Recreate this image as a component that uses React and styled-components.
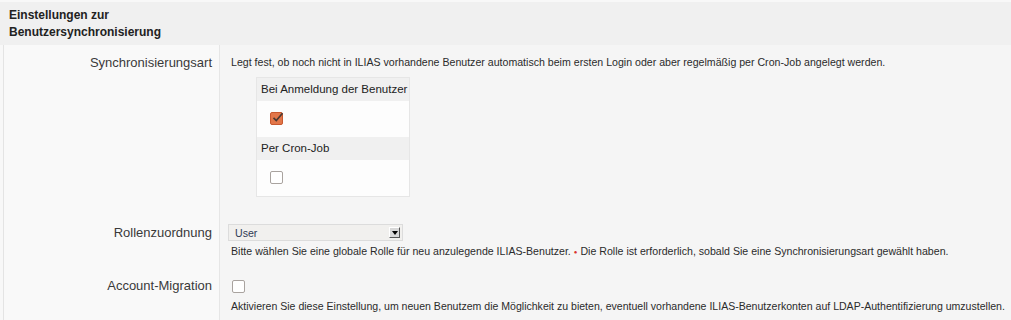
import React from "react";
import styled, { createGlobalStyle } from "styled-components";

const GlobalStyle = createGlobalStyle`
  html, body {
    margin: 0;
    padding: 0;
    background: #f5f5f5;
    font-family: "Liberation Sans", Arial, sans-serif;
    color: #333;
  }
`;

const Page = styled.div`
  width: 1011px;
  height: 320px;
  overflow: hidden;
  padding-top: 2px;
  box-sizing: border-box;
  background-color: #f8f8f8;
`;

const Header = styled.div`
  background: #f0f0f0;
  padding: 5px 9px 4px;
  font-size: 12px;
  font-weight: bold;
  line-height: 17px;
  color: #222;
  height: 43px;
  box-sizing: border-box;
`;

const FormBody = styled.div`
  margin-left: 3px;
  border-left: 1px solid #e4e4e4;
  background: #f5f5f5;
`;

const Row = styled.div`
  display: grid;
  grid-template-columns: 216px 1fr;
`;

const Label = styled.div`
  background: #f9f9f9;
  border-right: 1px solid #e6e6e6;
  text-align: right;
  font-size: 13px;
  line-height: 16px;
  color: #3a3a3a;
  padding: ${(p) => p.$top || "10px"} 7px ${(p) => p.$bottom || "15px"} 0;
`;

const Field = styled.div`
  padding: ${(p) => p.$top || "10px"} 0 ${(p) => p.$bottom || "15px"} 11px;
  font-size: 10.6px;
  line-height: 14px;
  color: #2b2b2b;
`;

const Info = styled.div`
  font-size: 10.6px;
  line-height: 14px;
  white-space: nowrap;
  margin-top: ${(p) => p.$mt || "0"};
`;

const Required = styled.span`
  color: #d9302c;
  margin: 0 3px 0 3px;
  font-size: 6px;
  vertical-align: 1px;
`;

const OptionBox = styled.div`
  width: 154px;
  margin: 8px 0 0 25px;
  border: 1px solid #e6e6e6;
  box-sizing: border-box;
  background: #fdfdfd;
`;

const OptionHead = styled.div`
  background: #f0f0f0;
  height: 23px;
  line-height: 23px;
  padding-left: 4px;
  font-size: 11.5px;
  color: #222;
  white-space: nowrap;
`;

const OptionBody = styled.div`
  height: 36px;
  padding: 11px 0 0 13px;
  box-sizing: border-box;
`;

const Box = styled.span`
  display: block;
  width: 13px;
  height: 13px;
  box-sizing: border-box;
  border-radius: 2px;
  border: 1px solid ${(p) => (p.$checked ? "#c8582f" : "#a9a39f")};
  background: ${(p) => (p.$checked ? "#e27649" : "#fff")};
  position: relative;
  margin-left: ${(p) => p.$ml || "0"};
  margin-top: ${(p) => p.$mt || "0"};
`;

const Check = styled.svg`
  position: absolute;
  left: 0px;
  top: -2px;
`;

function Checkbox({ checked, ml, mt }) {
  return (
    <Box $checked={checked} $ml={ml} $mt={mt}>
      {checked && (
        <Check width="13" height="13" viewBox="0 0 13 13">
          <path d="M2.5 6.8 L5.3 9.6 L11.5 2.2" fill="none" stroke="#4a3a33" strokeWidth="1.7" />
        </Check>
      )}
    </Box>
  );
}

const Select = styled.div`
  width: 175px;
  height: 17px;
  margin-left: -3px;
  border: 1px solid #dcdcdc;
  background: #f1f0ee;
  box-sizing: border-box;
  display: flex;
  align-items: center;
  justify-content: space-between;
  padding: 0 2px 0 6px;
  font-size: 10.6px;
  color: #2f3a55;
`;

const SelectButton = styled.span`
  width: 11px;
  height: 11px;
  box-sizing: border-box;
  background: #d8d8d8;
  border-top: 1px solid #fff;
  border-left: 1px solid #fff;
  border-right: 1px solid #555;
  border-bottom: 1px solid #555;
  display: flex;
  align-items: center;
  justify-content: center;
  &::after {
    content: "";
    border-left: 3px solid transparent;
    border-right: 3px solid transparent;
    border-top: 4px solid #000;
    margin-top: 1px;
  }
`;

export default function App() {
  return (
    <Page>
      <GlobalStyle />
      <Header>
        Einstellungen zur
        <br />
        Benutzersynchronisierung
      </Header>
      <FormBody>
        <Row>
          <Label $top="10px" $bottom="17px">Synchronisierungsart</Label>
          <Field $top="10px" $bottom="17px">
            <Info>
              Legt fest, ob noch nicht in ILIAS vorhandene Benutzer automatisch beim ersten Login oder aber regelmäßig per Cron-Job angelegt werden.
            </Info>
            <OptionBox>
              <OptionHead>Bei Anmeldung der Benutzer</OptionHead>
              <OptionBody>
                <Checkbox checked />
              </OptionBody>
              <OptionHead>Per Cron-Job</OptionHead>
              <OptionBody>
                <Checkbox />
              </OptionBody>
            </OptionBox>
          </Field>
        </Row>
        <Row>
          <Label $top="11px" $bottom="9px">Rollenzuordnung</Label>
          <Field $top="10px" $bottom="9px">
            <Select>
              User
              <SelectButton />
            </Select>
            <Info $mt="3px">
              Bitte wählen Sie eine globale Rolle für neu anzulegende ILIAS-Benutzer.
              <Required>●</Required>
              Die Rolle ist erforderlich, sobald Sie eine Synchronisierungsart gewählt haben.
            </Info>
          </Field>
        </Row>
        <Row>
          <Label $top="10px" $bottom="20px">Account-Migration</Label>
          <Field $top="12px" $bottom="20px">
            <Checkbox ml="1px" />
            <Info $mt="6px" style={{ fontSize: "10.55px" }}>
              Aktivieren Sie diese Einstellung, um neuen Benutzem die Möglichkeit zu bieten, eventuell vorhandene ILIAS-Benutzerkonten auf LDAP-Authentifizierung umzustellen.
            </Info>
          </Field>
        </Row>
      </FormBody>
    </Page>
  );
}
